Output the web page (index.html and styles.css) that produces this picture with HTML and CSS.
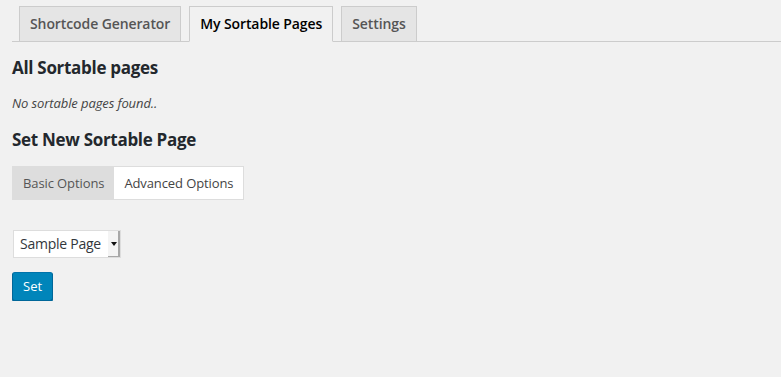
FILE: index.html
```html
<!DOCTYPE html>
<html>
<head>
<meta charset="utf-8">
<link rel="stylesheet" href="styles.css">
</head>
<body>
<div class="wrap">
  <nav class="nav-tabs">
    <a class="nav-tab">Shortcode Generator</a>
    <a class="nav-tab active">My Sortable Pages</a>
    <a class="nav-tab">Settings</a>
  </nav>
  <h3 class="title first">All Sortable pages</h3>
  <p class="empty">No sortable pages found..</p>
  <h3 class="title second">Set New Sortable Page</h3>
  <div class="sub-tabs">
    <span class="sub-tab current">Basic Options</span>
    <span class="sub-tab">Advanced Options</span>
  </div>
  <div class="select">
    <span class="select-label">Sample Page</span>
    <span class="select-btn"><span class="arrow"></span></span>
  </div>
  <button class="btn-primary">Set</button>
</div>
</body>
</html>
```
FILE: styles.css
```css
html, body {
  margin: 0;
  padding: 0;
  background: #f1f1f1;
}
body {
  font-family: "Open Sans", "Noto Sans", sans-serif;
  color: #444;
  font-size: 13px;
}
.wrap {
  padding: 6px 0 0 12px;
}
.nav-tabs {
  display: flex;
  gap: 8px;
  padding-left: 7px;
  border-bottom: 1px solid #ccc;
}
.nav-tab {
  display: block;
  padding: 5px 10px;
  line-height: 24px;
  font-size: 14px;
  font-weight: 600;
  letter-spacing: -0.1px;
  color: #555;
  background: #e5e5e5;
  border: 1px solid #ccc;
  margin-bottom: -1px;
}
.nav-tab.active {
  color: #000;
  background: #f1f1f1;
  border-bottom-color: #f1f1f1;
}
.title {
  margin: 0;
  font-size: 17px;
  line-height: 24px;
  font-weight: 700;
  letter-spacing: -0.3px;
  color: #23282d;
}
.title.first {
  margin-top: 14px;
}
.empty {
  margin: 13px 0 0;
  font-style: italic;
  font-size: 13px;
  line-height: 20px;
  letter-spacing: -0.1px;
  color: #444;
}
.title.second {
  margin-top: 15px;
}
.sub-tabs {
  display: flex;
  width: max-content;
  margin-top: 14px;
  border: 1px solid #ddd;
  background: #fff;
}
.sub-tab {
  padding: 6px 10px;
  line-height: 20px;
  font-size: 13px;
  letter-spacing: -0.1px;
  color: #444;
}
.sub-tab.current {
  background: #ddd;
  color: #555;
}
.select {
  display: flex;
  width: max-content;
  margin: 30px 0 0 1px;
  height: 26px;
  border: 1px solid #ddd;
  background: #fff;
}
.select-label {
  padding: 0 7px 0 6px;
  line-height: 26px;
  font-size: 14px;
  letter-spacing: -0.25px;
  color: #32373c;
}
.select-btn {
  position: relative;
  width: 10px;
  border-right: 2px solid #a8a8a8;
  border-bottom: 1px solid #a8a8a8;
  background: #f4f4f4;
}
.arrow {
  position: absolute;
  left: 3px;
  top: 11px;
  border-left: 3px solid transparent;
  border-right: 3px solid transparent;
  border-top: 4px solid #111;
}
.btn-primary {
  display: block;
  margin-top: 14px;
  height: 29px;
  padding: 0 10px 1px;
  font-family: "Open Sans", "Noto Sans", sans-serif;
  font-size: 13px;
  line-height: 26px;
  color: #fff;
  background: #0085ba;
  border: 1px solid #0073aa;
  border-color: #0073aa #006799 #006799;
  border-radius: 3px;
  box-shadow: 0 1px 0 #006799;
}
```
